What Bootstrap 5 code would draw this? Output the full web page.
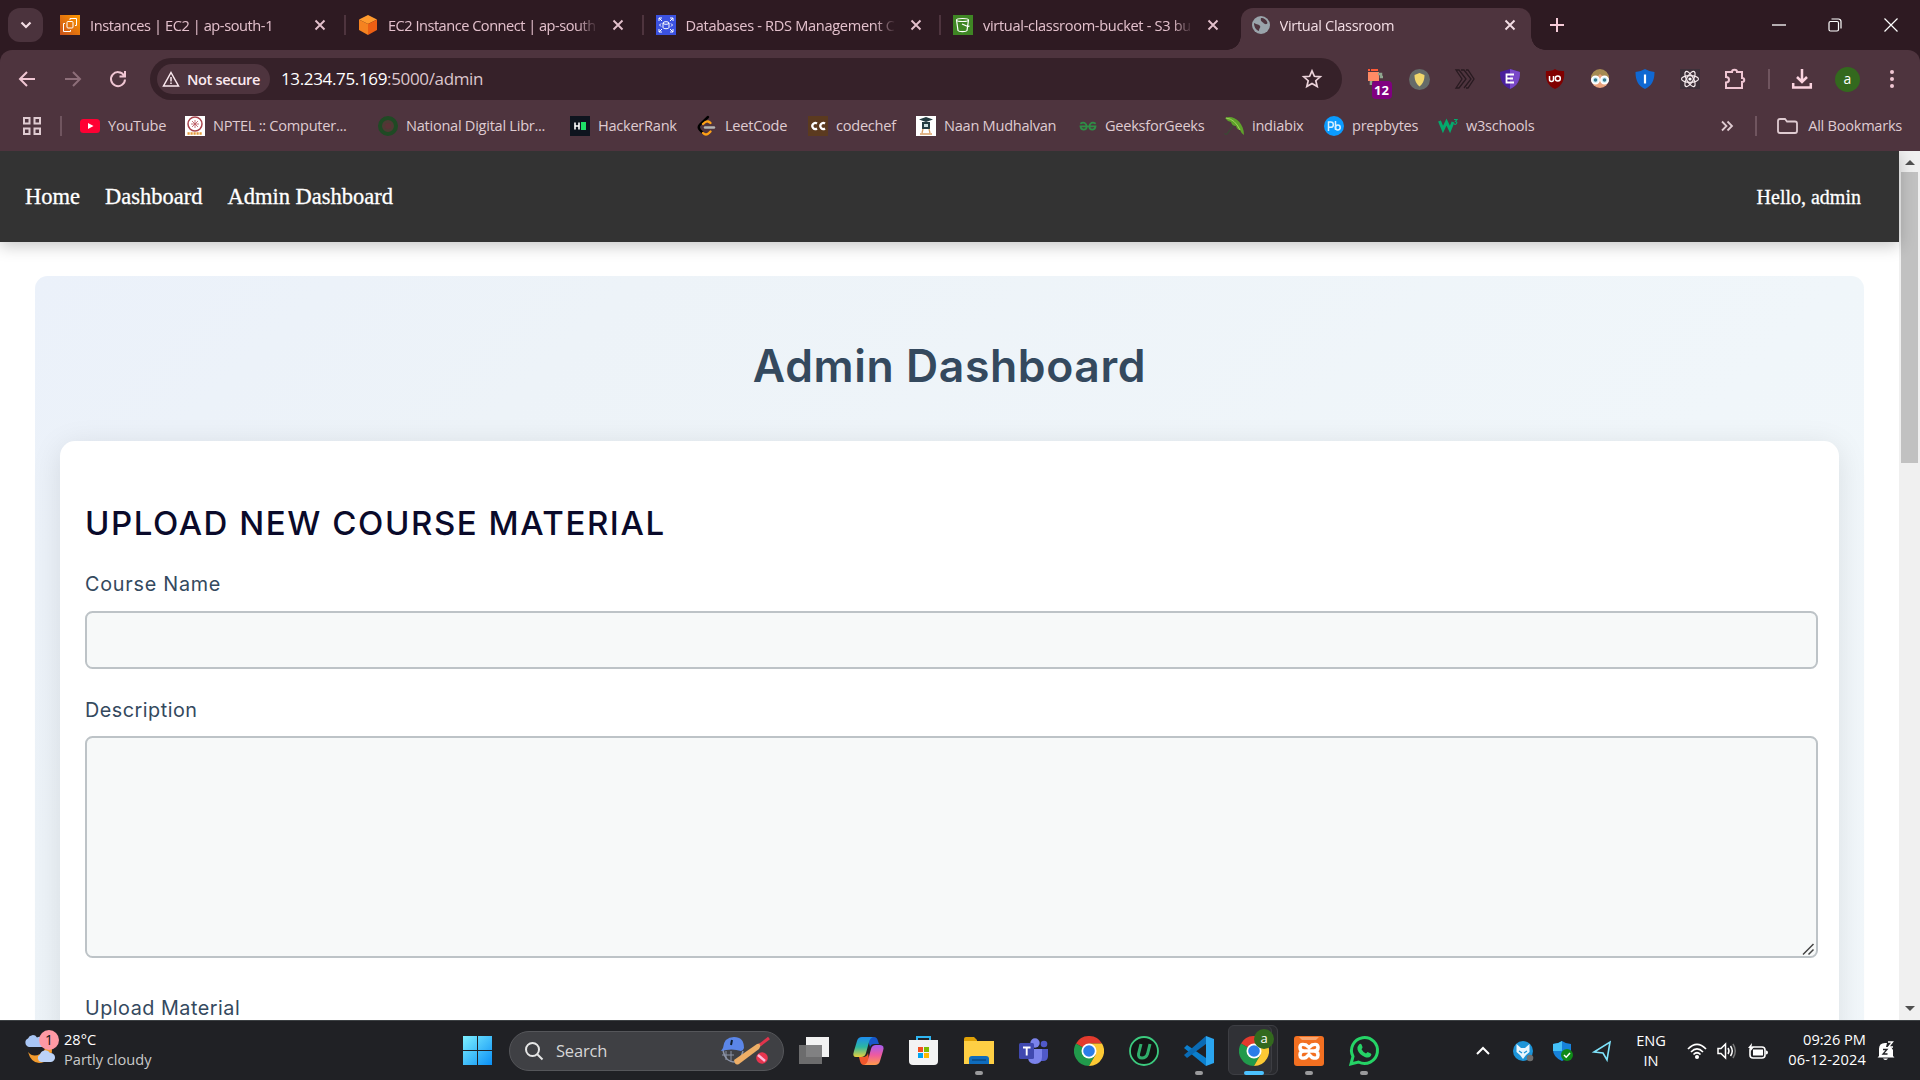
<!DOCTYPE html>
<html lang="en">
<head>
<meta charset="utf-8">
<title>Virtual Classroom</title>
<link href="https://cdn.jsdelivr.net/npm/bootstrap@5.3.0/dist/css/bootstrap.min.css" rel="stylesheet">
<style>
  html, body { height: 1080px; overflow: hidden; }
  body { width: 1920px; font-family: "Open Sans", "Noto Sans", sans-serif; font-size: 14.6px; line-height: 20px; background: #fff; }
  svg { display: block; flex: none; overflow: visible; }
  .t { white-space: nowrap; }

  /* tab strip */
  .tabstrip { height: 50px; background: #2e1a22; color: #e3c0cc; padding-left: 8px; letter-spacing: -.32px; }
  .tabsearch { width: 35px; height: 34px; border-radius: 12px; background: #4b333d; margin: 8px 8px 0 0; }
  .btab { width: 297.5px; height: 50px; padding: 0 3px 0 9px; }
  .btab.first { width: 298px; }
  .btab.first .ttl { letter-spacing: -.42px; }
  .btab .ttl { width: 210px; height: 20px; overflow: hidden; margin-left: 10px; -webkit-mask-image: linear-gradient(90deg, #000 90%, transparent 100%); }
  .btab .sep { width: 2px; height: 20px; background: #4e343e; margin-left: auto; }
  .btab .cls { margin-left: 14px; }
  .btab.on { width: 290px; height: 42px; margin-top: 8px; margin-left: -1px; padding: 0 14px 0 11px; background: #4e343e; border-radius: 12px 12px 0 0; color: #f3dde4; position: relative; }
  .btab.on .ttl { margin-left: 10px; margin-top: -8px; }
  .btab.on > svg { margin-top: -8px; }
  .btab.on .cls { margin-left: 14px; }
  .btab.on::before, .btab.on::after { content: ""; position: absolute; bottom: 0; width: 14px; height: 14px; }
  .btab.on::before { left: -14px; background: radial-gradient(circle at 0 0, transparent 13.5px, #4e343e 14px); }
  .btab.on::after { right: -14px; background: radial-gradient(circle at 100% 0, transparent 13.5px, #4e343e 14px); }
  .newtab { margin: 18px 0 0 19px; }
  .winbtns { padding-right: 22px; }

  /* toolbar */
  .toolbar { height: 57px; background: #4e343e; border-radius: 12px 12px 0 0; padding: 1px 21px 0 18px; }
  .under { background: #2e1a22; }
  .omni { width: 1192px; height: 42px; border-radius: 21px; background: #362129; margin-left: 22px; padding: 0 20px 0 7px; }
  .chip { width: 113px; height: 30px; border-radius: 15px; background: #4e343e; color: #fbe9ef; padding-left: 5px; gap: 7px; font-weight: 600; letter-spacing: -.36px; }
  .url { margin-left: 11px; font-size: 17px; color: #fff; letter-spacing: -.35px; }
  .url b { font-weight: 400; color: #dcc6cd; }
  .exts { display: grid; grid-template-columns: repeat(9, 45px); justify-items: center; margin-left: 10px; }
  .extbadge { position: absolute; left: 6px; top: 12px; width: 20px; height: 18px; border-radius: 4px; background: #800080; color: #fff; font: 700 13px/18px "Open Sans", sans-serif; text-align: center; }
  .vline { width: 2px; height: 20px; background: #70555f; }
  .ava { width: 25px; height: 25px; border-radius: 50%; background: #33691e; color: #fff; font-size: 14px; line-height: 23px; text-align: center; }

  /* bookmarks */
  .marks { height: 44px; background: #4e343e; color: #dfcbd1; padding: 0 18px 6px 23px; letter-spacing: -.27px; }
  .marks .t { margin-top: -2px; }
  .marklist { display: grid; grid-template-columns: 105px 193px 192px 127px 111px 108px 163px 145px 100px 114px 110px; margin-left: 18px; }
  .marklist > div { display: flex; align-items: center; gap: 8px; }
  .folderlbl { margin-left: 10px; }

  /* page */
  .viewport { height: 869px; overflow: hidden; }
  .scroller { width: 21px; background: #f0f0f0; padding: 0 2px; }
  .arrup { height: 21px; padding-top: 9px; }
  .arrdown { padding-top: 543px; }
  .thumb { height: 291px; background: #c1c1c1; }
  .sitenav { height: 91px; background: #333; box-shadow: 0 4px 15px rgba(0,0,0,.22); padding: 0 38px 0 25px; font-family: "Liberation Serif", serif; color: #fff; -webkit-text-stroke: .3px #fff; position: relative; }
  .sitenav .lnk { font-size: 22.5px; margin-right: 25px; color: #fff; }
  .sitenav .who { font-size: 20px; }
  .panel { margin: 34px 35px 0; height: 1200px; border-radius: 12.5px; background: linear-gradient(135deg, #ebf1fa, #edf3f8 20%, #f0f6fa 60%, #f3f8fb); padding: 0 25px; font-family: Inter, "Open Sans", sans-serif; }
  .panel h1 { font-size: 44.5px; font-weight: 600; line-height: 60px; color: #34495e; margin: 0; padding: 60px 0 45px; text-align: center; letter-spacing: .6px; }
  .upcard { height: 1000px; border-radius: 15px; background: #fff; box-shadow: 0 5px 30px rgba(0,0,0,.1); padding: 57px 21px 0 25px; }
  .upcard h2 { font-size: 33px; font-weight: 500; line-height: 50px; color: #0a0a2a; margin: 0 0 23px; letter-spacing: 1.56px; }
  .upcard label { display: block; font-size: 19.8px; line-height: 27px; color: #34495e; letter-spacing: .5px; }
  .upcard label.wide { letter-spacing: .75px; }
  .fld { width: 1733px; border: 2px solid #bdc3c7; border-radius: 7.5px; background: #f7f9f9; position: relative; }
  .fld.one { height: 58px; margin: 13px 0 28px; }
  .fld.many { height: 222px; margin: 12px 0 37px; }
  .grip { position: absolute; right: 2px; bottom: 1px; }

  /* taskbar */
  .taskbar { height: 60px; background: #202125; border-top: 1px solid #3c4043; color: #fff; }
  .weather { width: 463px; padding-left: 24px; }
  .lines { margin-top: -4px; }
  .dim { color: #c9c9c9; }
  .wicon { width: 34px; margin-right: 6px; }
  .wbadge { position: absolute; left: 15px; top: -6px; width: 20px; height: 20px; border-radius: 50%; background: #ff99a4; color: #111; font-size: 14px; text-align: center; }
  .srch { width: 275px; height: 40px; border-radius: 20px; background: #3f4044; border: 1px solid #55565a; padding: 0 13px 0 15px; margin: 0 2px 0 17px; color: #d6d6d6; font-size: 16.5px; letter-spacing: -.2px; gap: 13px; }
  .tasks { display: grid; grid-template-columns: repeat(11, 55px); height: 59px; }
  .tk { position: relative; display: flex; align-items: center; justify-content: center; }
  .tk.run::after { content: ""; position: absolute; bottom: 5px; left: 24px; width: 8px; height: 4px; border-radius: 2px; background: #9a9a9c; }
  .tk.act::after { left: 18px; width: 20px; background: #4cc2ff; }
  .tk.act::before { content: ""; position: absolute; left: 2px; top: 4px; width: 50px; height: 50px; border-radius: 6px; background: #303136; border: 1px solid #3d3e43; box-shadow: inset -5px 0 #292a2e, inset -6px 0 #3d3e43; }
  .tk svg { position: relative; }
  .mini { position: absolute; left: 28px; top: 8px; width: 20px; height: 20px; border-radius: 50%; background: #33691e; color: #fff; font: 13px/19px "Open Sans", sans-serif; text-align: center; z-index: 2; }
  .tray { display: grid; grid-template-columns: 40px 40px 40px 38px 60px 32px 28px 34px; justify-items: center; margin: 0 13px 0 auto; align-items: center; }
  .clock { width: 78px; }
  .bell { margin: 0 25px 0 11px; }
</style>
<script src="https://cdn.jsdelivr.net/npm/bootstrap@5.3.0/dist/js/bootstrap.bundle.min.js"></script>
</head>
<body>
<svg width="0" height="0" class="position-absolute">
  <symbol id="x" viewBox="0 0 12 12"><path d="M1.5 1.5l9 9M10.5 1.5l-9 9" stroke="currentColor" stroke-width="1.9" fill="none"/></symbol>
  <symbol id="chrome" viewBox="0 0 30 30"><path d="M15 15L2 7.5A15 15 0 0 1 28 7.5L15 7.5z" fill="#e33b2e"/><path d="M2 7.5A15 15 0 0 0 15 30L21.500 18.700 15 15z" fill="#219a4b"/><path d="M28 7.5A15 15 0 0 1 15 30L21.500 18.700 15 7.5z" fill="#fcc934"/><circle cx="15" cy="15" r="7.5" fill="#fff"/><circle cx="15" cy="15" r="5.800" fill="#2b7de9"/></symbol>
</svg>

<div class="tabstrip d-flex">
  <div class="tabsearch d-flex align-items-center justify-content-center"><svg width="12" height="8"><path d="M1.500 1.500L6 6l4.500-4.500" stroke="#f3dde4" stroke-width="2.200" fill="none"/></svg></div>
  <div class="btab first d-flex align-items-center">
    <svg width="20" height="20" viewBox="0 0 20 20"><defs><linearGradient id="o" x2="1" y2="0" y1="1"><stop stop-color="#c8511b"/><stop offset="1" stop-color="#f90"/></linearGradient></defs><path fill="url(#o)" d="M0 0h20v20H0z"/><g fill="none" stroke="#fff"><rect x="7" y="6.500" width="6" height="6.500" rx="1"/><path d="M10 5V3.500h6.500v7H15M5 8.500H3.500v8h7V15"/></g></svg>
    <div class="ttl"><span class="t">Instances | EC2 | ap-south-1</span></div><svg class="cls" width="12" height="12"><use href="#x"/></svg><i class="sep"></i>
  </div>
  <div class="btab d-flex align-items-center">
    <svg width="20" height="20" viewBox="0 0 20 20"><path fill="#ff9a2e" d="M10 0l9 4.500-9 4.500-9-4.500z"/><path fill="#f58220" d="M1 4.500L10 9v11l-9-5z"/><path fill="#ec5f14" d="M19 4.500L10 9v11l9-5z"/></svg>
    <div class="ttl" style="letter-spacing:-.5px"><span class="t">EC2 Instance Connect | ap-south</span></div><svg class="cls" width="12" height="12"><use href="#x"/></svg><i class="sep"></i>
  </div>
  <div class="btab d-flex align-items-center">
    <svg width="20" height="20" viewBox="0 0 20 20"><path fill="#3b52e0" d="M0 0h20v20H0z"/><g fill="none" stroke="#fff"><path d="M3 6V3h3M3 3l3 3M14 3h3v3M17 3l-3 3M3 14v3h3M3 17l3-3M14 17h3v-3M17 17l-3-3M5 8.500L3.500 10 5 11.500M15 8.500l1.500 1.500-1.500 1.500"/><ellipse cx="10" cy="8" rx="3" ry="1.300"/><path d="M7 8v4.500c0 1.600 6 1.600 6 0V8"/></g></svg>
    <div class="ttl"><span class="t">Databases - RDS Management C</span></div><svg class="cls" width="12" height="12"><use href="#x"/></svg><i class="sep"></i>
  </div>
  <div class="btab d-flex align-items-center">
    <svg width="20" height="20" viewBox="0 0 20 20"><path fill="#3f8624" d="M0 0h20v20H0z"/><g fill="none" stroke="#fff" stroke-width="1.200"><ellipse cx="9.500" cy="5" rx="6" ry="1.500"/><path d="M3.500 5l1.500 10.500c1 1.500 8 1.500 9 0L15.500 5M9 9l6 2.500 1.500-.5"/></g></svg>
    <div class="ttl"><span class="t">virtual-classroom-bucket - S3 bu</span></div><svg class="cls" width="12" height="12"><use href="#x"/></svg>
  </div>
  <div class="btab on d-flex align-items-center">
    <svg width="18" height="18" viewBox="0 0 18 18"><circle cx="9" cy="9" r="9" fill="#9aa4ab"/><path d="M2 7c3 2 5 1 6 3 1 1.500-1 2-1 5-3-1-5-4-5-8zM9 2c3 0 6 2 6.500 5-1 2-3 1-4 0S8 5 9 2z" fill="#4e343e"/></svg>
    <div class="ttl"><span class="t">Virtual Classroom</span></div><svg class="cls" width="12" height="12"><use href="#x"/></svg>
  </div>
  <svg width="14" height="14" class="newtab"><path d="M7 0v14M0 7h14" stroke="#f6cbd8" stroke-width="2"/></svg>
  <div class="winbtns ms-auto d-flex align-items-center" style="gap:42px">
    <svg width="14" height="14"><path d="M0 7h14" stroke="#fff" stroke-width="1.300"/></svg>
    <svg width="14" height="14" fill="none" stroke="#fff" stroke-width="1.200"><rect x="1" y="3.500" width="9.500" height="9.500" rx="1.500"/><path d="M3.500 1h7a2.500 2.500 0 0 1 2.500 2.500v7"/></svg>
    <svg width="14" height="14"><path d="M.5 .5l13 13M13.500 .5l-13 13" stroke="#fff" stroke-width="1.200"/></svg>
  </div>
</div>

<div class="under"><div class="toolbar d-flex align-items-center">
  <svg width="18" height="16" fill="none" stroke="#f0c6d3" stroke-width="2"><path d="M17 8H3M9 1L2 8l7 7"/></svg>
  <svg width="18" height="16" fill="none" stroke="#8d6e79" stroke-width="2" style="margin-left:28px"><path d="M1 8h14M9 1l7 7-7 7"/></svg>
  <svg width="18" height="18" viewBox="0 0 18 18" fill="none" stroke="#f0c6d3" stroke-width="2" style="margin-left:27px;margin-right:1px"><path d="M15 5.500A7 7 0 1 0 16 9.500M16 1v5.500h-5.500"/></svg>
  <div class="omni d-flex align-items-center">
    <div class="chip d-flex align-items-center"><svg width="18" height="16" viewBox="0 0 18 16" fill="none" stroke="#fbe9ef" stroke-width="1.500"><path d="M9 1.500L16.500 15h-15zM9 6v4.500M9 11.500v1.600"/></svg><span class="t">Not secure</span></div>
    <div class="url t">13.234.75.169<b>:5000/admin</b></div>
    <svg width="20" height="20" viewBox="0 0 20 20" class="ms-auto" fill="none" stroke="#ecd3da" stroke-width="1.700"><path d="M10 1.800l2.400 5.500 5.900.5-4.500 3.900 1.400 5.900-5.200-3.100-5.200 3.100 1.400-5.900L1.700 7.800l5.900-.5z"/></svg>
  </div>
  <div class="exts">
    <div class="position-relative"><svg width="18" height="20"><path d="M2 3h11v9H2z" fill="#ff8a65"/><path d="M2 1h2M5 1h7" stroke="#ff5a36" stroke-width="2"/><path d="M12 5h3v3h2M5 12v4" stroke="#8fa58e" stroke-width="2.500" fill="none"/></svg><span class="extbadge">12</span></div>
    <svg width="21" height="21"><circle cx="10.500" cy="10.500" r="10.500" fill="#656b69"/><path d="M10.500 4l5 2c0 6-2 9-5 11.500C7.500 15 5.500 12 5.500 6z" fill="#f1d76b"/></svg>
    <svg width="20" height="20" fill="none" stroke="#281a20" stroke-width="1.300"><path d="M1 1h3l7 9-7 9H1l6-9zM6 1h3l7 9-7 9M11 1h2l6 9-6 9h-2"/></svg>
    <svg width="20" height="20"><path d="M10 0l10 3c0 9-3 14-10 17C3 17 0 12 0 3z" fill="#4a1f9c"/><path d="M10 0l10 3c0 9-3 14-10 17z" fill="#7a48c8"/><path d="M14 5.500H6.500v8H14M6.500 9.500H13" stroke="#fff" stroke-width="1.800" fill="none"/></svg>
    <svg width="20" height="20"><path d="M10 0c3 2 6 2 9 2 1 9-2 15-9 18C3 17 0 11 1 2c3 0 6 0 9-2z" fill="#800000"/><path d="M4.500 7v3.500a2 2 0 0 0 4 0V7" fill="none" stroke="#fff" stroke-width="1.500"/><circle cx="12.800" cy="9.500" r="2.500" fill="none" stroke="#fff" stroke-width="1.500"/></svg>
    <svg width="20" height="20"><circle cx="10" cy="10" r="9" fill="#e8a27c"/><path d="M1 9a9 9 0 0 1 18 0q-6-1-9-4-3 4-9 4z" fill="#a58a52"/><g fill="#d5f1fa" stroke="#fff" stroke-width="1.500"><circle cx="5.500" cy="11" r="3.700"/><circle cx="14.500" cy="11" r="3.700"/></g><circle cx="5.500" cy="11" r="1.800" fill="#35798b"/><circle cx="14.500" cy="11" r="1.800" fill="#35798b"/></svg>
    <svg width="20" height="20"><path d="M10 0q5 3 9.500 3c0 9-3 14-9.500 17C3.500 17 .5 12 .5 3Q5 3 10 0z" fill="#1068d2"/><path d="M10 5.500v9" stroke="#fff" stroke-width="2.200"/></svg>
    <svg width="20" height="20"><path fill="#3c3039" d="M0 0h20v20H0z"/><g fill="none" stroke="#f3e9ec" stroke-width="1.200"><ellipse cx="10" cy="10" rx="8.500" ry="3.300"/><ellipse cx="10" cy="10" rx="8.500" ry="3.300" transform="rotate(60 10 10)"/><ellipse cx="10" cy="10" rx="8.500" ry="3.300" transform="rotate(120 10 10)"/></g><circle cx="10" cy="10" r="1.600" fill="#fff"/></svg>
    <svg width="20" height="20" fill="none" stroke="#f0c6d3" stroke-width="2"><path d="M1 3h6c0-3 5-3 5 0h5v6c3 0 3 4 0 4v6H1v-5.500c4 0 4-5.500 0-5.500z"/></svg>
  </div>
  <i class="vline" style="margin-left:11px"></i>
  <svg width="20" height="20" fill="none" stroke="#fbd3df" stroke-width="2.500" style="margin-left:22px"><path d="M10 0v13M5 8l5 5 5-5M1.200 14v4.500h17.600V14"/></svg>
  <div class="ava" style="margin-left:23px">a</div>
  <svg width="4" height="18" class="ms-auto" style="margin-right:5px" fill="#f0c6d3"><circle cx="2" cy="2" r="2"/><circle cx="2" cy="9" r="2"/><circle cx="2" cy="16" r="2"/></svg>
</div></div>

<div class="marks d-flex align-items-center">
  <svg width="18" height="18" fill="none" stroke="#dfcbd1" stroke-width="2"><path d="M1 1h5.500v5.500H1zM11.500 1H17v5.500h-5.500zM1 11.500h5.500V17H1zM11.500 11.500H17V17h-5.500z"/></svg>
  <i class="vline" style="margin-left:19px"></i>
  <div class="marklist">
    <div><svg width="20" height="20"><rect y="3" width="20" height="14" rx="3.500" fill="#f03"/><path d="M8 7l5.500 3L8 13z" fill="#fff"/></svg><span class="t">YouTube</span></div>
    <div><svg width="20" height="20"><path fill="#fff" d="M0 0h20v20H0z"/><circle cx="10" cy="8" r="7" fill="none" stroke="#a8434c" stroke-width="1.500"/><path d="M10 4v8M6 8h8M7 5l6 6M13 5l-6 6" stroke="#b8535c" stroke-width=".8"/><path d="M2.500 17.500h15" stroke="#e39a3b" stroke-width="2.500" stroke-dasharray="2.200 .8"/></svg><span class="t">NPTEL :: Computer...</span></div>
    <div><svg width="20" height="20"><circle cx="10" cy="10" r="8" fill="#4e3a34" stroke="#1f4a24" stroke-width="4"/><circle cx="10" cy="10" r="3" fill="#5b3236"/></svg><span class="t">National Digital Libr...</span></div>
    <div><svg width="20" height="20"><path fill="#0e141e" d="M0 0h20v20H0z"/><path d="M5 6.500v7M9 6.500v7M5 10h4" stroke="#fff" stroke-width="1.600"/><path fill="#1ee066" d="M11 6h5v8h-5z"/></svg><span class="t">HackerRank</span></div>
    <div><svg width="20" height="20" fill="none" stroke-linecap="round" stroke-width="2.400"><path d="M11 1L3 8.500q-2.500 2.500 0 5.500l3 3" stroke="#000"/><path d="M6 8q3-3 5-2.500 1.500.5 2.500 1.500M6 17q3 3 6 0l1.500-1.500" stroke="#ffa116"/><path d="M8 11.500h9" stroke="#b3b3b3"/></svg><span class="t">LeetCode</span></div>
    <div><svg width="20" height="20"><path fill="#5b3a1f" d="M0 0h20v20H0z"/><path d="M9 7.500a3 3 0 1 0 0 5M17 7.500a3 3 0 1 0 0 5" fill="none" stroke="#fff" stroke-width="2.200"/></svg><span class="t">codechef</span></div>
    <div><svg width="20" height="20"><path fill="#fff" d="M0 0h20v20H0z"/><path d="M3 3.500L10 1l7 2.500L10 6zM6 6h8v7H6z" fill="#243b40"/><path d="M8 8h4v3H8z" fill="#cdd"/><path d="M7 13l-1 4M13 13l1 4M4 18h12" stroke="#d9a066" stroke-width="1.300"/></svg><span class="t">Naan Mudhalvan</span></div>
    <div><svg width="18" height="20" viewBox="0 0 20 20" fill="none" stroke="#2f8d46" stroke-width="2"><path d="M1.500 7.500Q4 5.500 6 6.500q2.500 1.500 2.500 4 0 3.500-3.300 3.500Q2 14 1.700 10.500h16.600Q18 14 14.800 14q-3.300 0-3.300-3.500 0-2.500 2.500-4 2-1 4.500 1"/></svg><span class="t">GeeksforGeeks</span></div>
    <div><svg width="20" height="20"><path d="M10 8l-7 10q-2 1-2-1" stroke="#3b4a35" stroke-width="1.300" fill="none"/><path d="M1 2C8-2 20 5 20 19q-3-2-4-5-3 0-4-4-4 0-5-4-4-1-6-4z" fill="#5fa12b"/><path d="M2 2q9 1 14 12" stroke="#9ed25a" fill="none"/></svg><span class="t">indiabix</span></div>
    <div><svg width="20" height="20"><circle cx="10" cy="10" r="10" fill="#0a9bff"/><g fill="none" stroke="#d7efff" stroke-width="1.500"><path d="M4.500 15V6h2.200a2.500 2.500 0 0 1 0 5.300H4.500M11.500 5v9"/><circle cx="13.800" cy="11.500" r="2.400"/></g></svg><span class="t">prepbytes</span></div>
    <div><svg width="20" height="20" fill="none" stroke="#04aa6d"><path d="M1.500 5L5 13.500 8.500 6l3.500 7.500L15 6" stroke-width="3"/><path d="M16 3.500h3l-1.500 2q2 .5 1 2t-2.500.3" stroke-width="1.200"/></svg><span class="t">w3schools</span></div>
  </div>
  <div class="ms-auto d-flex align-items-center">
    <svg width="12" height="10" fill="none" stroke="#dfcbd1" stroke-width="1.800"><path d="M1 .5L5.500 5 1 9.500M6.500 .5L11 5 6.500 9.500"/></svg>
    <i class="vline" style="margin:0 20px 0 22px"></i>
    <svg width="21" height="16" fill="none" stroke="#dfcbd1" stroke-width="1.800"><path d="M1 13V3q0-2 2-2h5l2 2.500h8q2 0 2 2V13q0 2-2 2H3q-2 0-2-2z"/></svg>
    <span class="t folderlbl">All Bookmarks</span>
  </div>
</div>

<div class="viewport d-flex">
  <div class="flex-grow-1">
    <nav class="sitenav d-flex align-items-center">
      <span class="lnk t">Home</span><span class="lnk t">Dashboard</span><span class="lnk t">Admin Dashboard</span>
      <span class="who ms-auto t">Hello, admin</span>
    </nav>
    <main class="panel">
      <h1>Admin Dashboard</h1>
      <div class="upcard">
        <h2>UPLOAD NEW COURSE MATERIAL</h2>
        <label class="wide">Course Name</label>
        <div class="fld one"></div>
        <label>Description</label>
        <div class="fld many"><svg class="grip" width="11" height="11"><path d="M0 10.500L10.500 0M5.500 10.500l5-5" stroke="#444" stroke-width="1.500"/></svg></div>
        <label>Upload Material</label>
      </div>
    </main>
  </div>
  <div class="scroller">
    <div class="arrup d-flex justify-content-center"><svg width="10" height="5"><path d="M0 5l5-5 5 5z" fill="#505050"/></svg></div>
    <div class="thumb"></div>
    <div class="arrdown d-flex justify-content-center"><svg width="10" height="5"><path d="M0 0l5 5 5-5z" fill="#505050"/></svg></div>
  </div>
</div>

<footer class="taskbar d-flex align-items-center">
  <div class="weather d-flex align-items-center">
    <div class="wicon position-relative"><svg width="34" height="30"><path d="M4 16q5 6 12 2 5-3 6-8l6 1q1 12-8 15Q8 30 4 16z" fill="#f39b2d"/><path d="M5 11a4.500 4.500 0 0 1-1-8.500 5 5 0 0 1 9-1 5 5 0 0 1 5 9.500z" fill="#a9c6f5"/><path d="M17 26a4 4 0 0 1-1-7.500 5.500 5.500 0 0 1 10-1.500 4.500 4.500 0 0 1 1 9z" fill="#bcd3f8"/></svg><span class="wbadge">1</span></div>
    <div class="lines"><div class="t">28°C</div><div class="t dim">Partly cloudy</div></div>
  </div>
  <svg width="29" height="29"><defs><linearGradient id="w" x2="1" y2="1"><stop stop-color="#7df0ff"/><stop offset="1" stop-color="#0a8ff5"/></linearGradient></defs><path d="M0 0h14v14H0zM15 0h14v14H15zM0 15h14v14H0zM15 15h14v14H15z" fill="url(#w)"/></svg>
  <div class="srch d-flex align-items-center">
    <svg width="18" height="18" fill="none" stroke="#e6e6e6" stroke-width="2"><circle cx="7.500" cy="7.500" r="6.500"/><path d="M12 12l5.500 5.500"/></svg>
    <span class="t">Search</span>
    <svg width="50" height="29" class="ms-auto"><path d="M3 14q2 12 12 12 6-2 8-11" stroke="#8b93a6" stroke-width="1.500" fill="none"/><path d="M2 19h12M6 15v9M11 15v11" stroke="#8b93a6"/><path d="M3 12Q4 1 14 1t10 11q-1 3-3 3Q12 12 1 15z" fill="#5b86e8"/><path d="M12 4l-1 5" stroke="#123" stroke-width="2"/><path d="M14 24L37 8l5-1-3 6-20 15q-4 2-5-4z" fill="#eeae66"/><path d="M40 9l9-7" stroke="#e0344c" stroke-width="3"/><circle cx="42" cy="22" r="5.800" fill="#e8354f"/><path d="M38 19l7 6" stroke="#fbd" stroke-width="2.500"/></svg>
  </div>
  <div class="tasks">
    <div class="tk"><svg width="30" height="28"><path fill="#f2f2f2" d="M7 0h23v20H7z"/><rect y="8" width="23" height="19" fill="#747476" opacity=".9"/></svg></div>
    <div class="tk"><svg width="31" height="28"><defs><linearGradient id="c1" x2="0" y2="1"><stop stop-color="#1e8df0"/><stop offset=".5" stop-color="#2cb7a0"/><stop offset="1" stop-color="#e8cf3c"/></linearGradient><linearGradient id="c2" x2="0" y2="1"><stop stop-color="#a45cf0"/><stop offset=".5" stop-color="#ee5aa0"/><stop offset="1" stop-color="#ff9b4a"/></linearGradient></defs><path d="M14 0h7q3 0 4 4l1 3h-5q-3 0-4 3z" fill="#1657c9"/><path d="M9 0h11q-3 1-4 5l-3 11q-1 4-5 4H3q-4 0-2-6L4 4q1-4 5-4z" fill="url(#c1)"/><path d="M17 28H11q-3 0-4-4l-1-4h4q4 0 5-4z" fill="#f0572c"/><path d="M22 28H11q3-1 4-5l3-11q1-4 5-4h4q5 0 3 6l-3 10q-1 4-5 4z" fill="url(#c2)"/></svg></div>
    <div class="tk"><svg width="29" height="29"><path d="M8 6V1h13v5" fill="none" stroke="#2fb6f2" stroke-width="2"/><path d="M0 4h29v21q0 4-4 4H4q-4 0-4-4z" fill="#f3f3f3"/><path fill="#f25022" d="M9 11h5v5H9z"/><path fill="#7fba00" d="M15 11h5v5h-5z"/><path fill="#00a4ef" d="M9 17h5v5H9z"/><path fill="#ffb900" d="M15 17h5v5h-5z"/></svg></div>
    <div class="tk run"><svg width="30" height="27"><path d="M0 2q0-2 2-2h8l3 3v5H0z" fill="#e0a106"/><path d="M0 4h30v23H0z" fill="#fecf44"/><path d="M5 27v-5q0-3 3-3h14q3 0 3 3v5z" fill="#0f6cbd"/><path d="M8 23h14" stroke="#0a4a86" stroke-width="1.500"/></svg></div>
    <div class="tk"><svg width="30" height="26"><circle cx="25" cy="6" r="3.300" fill="#5059c9"/><path d="M19 11h10v7q0 5-5 5h-5z" fill="#5059c9"/><circle cx="16" cy="5" r="4.700" fill="#7b83eb"/><path d="M9 11h14v8q0 7-7 7t-7-7z" fill="#7b83eb"/><rect y="5" width="15" height="16" rx="1.500" fill="#4049b0"/><path d="M4 9.500h7.500M7.700 9.500v8" stroke="#fff" stroke-width="1.900"/></svg></div>
    <div class="tk"><svg width="30" height="30"><use href="#chrome"/></svg></div>
    <div class="tk"><svg width="30" height="30"><circle cx="15" cy="15" r="14" fill="#131615" stroke="#3ccb7f" stroke-width="1.800"/><path d="M12 8L9.500 18q-.5 4 3.500 4t5.500-4L21 8" fill="none" stroke="#2fae6b" stroke-width="3"/></svg></div>
    <div class="tk run"><svg width="30" height="30"><path d="M0 12l3-3 19 13v8z" fill="#0b7fce"/><path d="M0 19l3 3L22 8V0z" fill="#0a6bb5"/><path d="M22 0l8 3v24l-8 3z" fill="#2aa5f0"/></svg></div>
    <div class="tk run act"><svg width="30" height="30"><use href="#chrome"/></svg><span class="mini">a</span></div>
    <div class="tk run"><svg width="30" height="30"><rect width="30" height="30" rx="3" fill="#f37021"/><path d="M5 1h20l-3 3H8z" fill="#f9a66f"/><path d="M15 15H10M15 15h5M12 9q-6-2-6 2.500 0 3.500 4 3.500-4 0-4 4 0 4.500 6 2.500l3-3 3 3q6 2 6-2.500 0-4-4-4 4 0 4-3.500 0-4.500-6-2.500l-3 2.500z" fill="none" stroke="#fff" stroke-width="3.500"/></svg></div>
    <div class="tk run"><svg width="30" height="30"><path d="M2 28l2-7.500A13 13 0 1 1 9.500 26z" fill="none" stroke="#25d366" stroke-width="3"/><path d="M10 8.500q1.500-1.500 2.500 0l1 2.500q.3 1-1 2.300 1.500 3 4.500 4.200l1.600-1.600 3.200 1.500q1.200.6 0 2.500-2 2.600-6 1Q10 18.500 8.500 13.500 8 10.500 10 8.500z" fill="#25d366"/></svg></div>
  </div>
  <div class="tray">
    <svg width="14" height="9"><path d="M1 8l6-6 6 6" fill="none" stroke="#fff" stroke-width="2"/></svg>
    <svg width="20" height="20"><circle cx="10" cy="10" r="10" fill="#1c94d8"/><path d="M3.500 3l4.500 4h4l4.500-4v8L13 14l-3 4-3-4-3.500-3z" fill="#eaf6fd"/><path d="M6 10l3 2M14 10l-3 2" stroke="#1c94d8" stroke-width="1.300"/><circle cx="17" cy="17" r="3.300" fill="#6f6f6f"/></svg>
    <svg width="20" height="20"><path d="M9 0q4 3 9 3v6q0 7-9 11Q0 16 0 9V3q5 0 9-3z" fill="#1782da"/><path d="M9 0v10H0V3q5 0 9-3z" fill="#45c1f7"/><circle cx="14" cy="14" r="6" fill="#0f8a18"/><path d="M11 14l2.200 2.200L17 12" stroke="#fff" stroke-width="1.500" fill="none"/></svg>
    <svg width="18" height="20"><path d="M17 1L14 19l-4-7-9-1z" fill="none" stroke="#7fe3fb" stroke-width="1.600"/></svg>
    <div class="text-center" style="margin-top:-2px"><div>ENG</div><div>IN</div></div>
    <svg width="20" height="16" fill="none" stroke="#fff" stroke-width="1.700"><path d="M1 6q9-9 18 0M4 9q6-6 12 0M6.500 11.500q3.500-3.500 7 0"/><circle cx="10" cy="14" r="1.200" fill="#fff"/></svg>
    <svg width="20" height="16" fill="none" stroke="#fff" stroke-width="1.500"><path d="M1 5.500h3L8.500 1v14L4 10.500H1zM11 5q2 3 0 6M13.500 3q3.500 5 0 10"/><path d="M16 1q4.500 7 0 14" stroke="#777"/></svg>
    <svg width="20" height="16"><rect x="2" y="4" width="15" height="11" rx="3" fill="none" stroke="#fff" stroke-width="1.600"/><rect x="5" y="6.500" width="10" height="6" fill="#fff"/><path d="M18 7.500q2 0 2 2t-2 2z" fill="#fff"/><path d="M4 0L0 5h3l-1 4 4-5H3.500z" fill="#fff"/></svg>
  </div>
  <div class="clock lines text-end"><div class="t">09:26 PM</div><div class="t" style="letter-spacing:.15px">06-12-2024</div></div>
  <svg width="18" height="20" class="bell"><path d="M2 15V8q0-6 6-6h2l-1 4h5l2 3v6l1.500 1.500H.5zM6 17.500h5q-2.500 3-5 0z" fill="#fff"/><path d="M11 1h4.500l-4 5H16" fill="none" stroke="#fff" stroke-width="1.400"/><path d="M6 8.500h4l-4 4.500h4.500" fill="none" stroke="#202125" stroke-width="1.300"/></svg>
</footer>
</body>
</html>
